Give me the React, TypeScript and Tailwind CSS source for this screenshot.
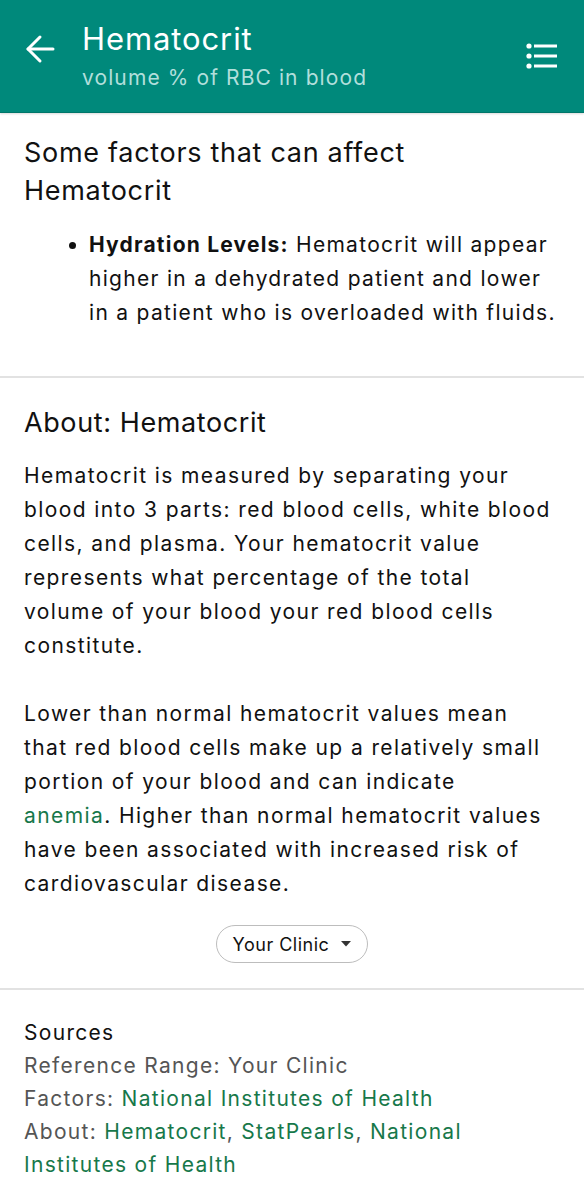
import React from "react";

function BackArrow() {
  return (
    <svg width="30" height="30" viewBox="0 0 30 30" fill="none" stroke="white" strokeWidth="3" strokeLinecap="round" strokeLinejoin="round">
      <path d="M3 15H28" />
      <path d="M15 3L3 15L15 27" />
    </svg>
  );
}

function MenuIcon() {
  return (
    <svg width="34" height="26" viewBox="0 0 34 26" fill="white">
      <circle cx="4" cy="3" r="2.6" />
      <circle cx="4" cy="13" r="2.6" />
      <circle cx="4" cy="23" r="2.6" />
      <rect x="9" y="1.5" width="23" height="3" />
      <rect x="9" y="11.5" width="23" height="3" />
      <rect x="9" y="21.5" width="23" height="3" />
    </svg>
  );
}

function Link({ children }: { children: React.ReactNode }) {
  return <span className="text-[#17784a]">{children}</span>;
}

export default function App() {
  return (
    <div className="w-[584px] min-h-[1200px] bg-white text-[#111] font-['Inter','Noto_Sans',sans-serif]">
      <header className="h-[113px] bg-[#00897b] border-b border-[#00766a] shadow-[0_1px_2px_rgba(0,0,0,0.15)] flex items-start">
        <div className="w-[82px] pl-[25px] pt-[34px] shrink-0">
          <BackArrow />
        </div>
        <div className="flex-1 flex flex-col pt-[19px]">
          <div className="text-white text-[31px] leading-[40px] tracking-[0.9px]">Hematocrit</div>
          <div className="text-[#b2dfdb] text-[21px] leading-[30px] tracking-[1.1px] mt-[4px]">volume % of RBC in blood</div>
        </div>
        <div className="pr-[25px] pt-[43px] shrink-0">
          <MenuIcon />
        </div>
      </header>

      <section className="pl-[24px] pr-[16px] pt-[21px] pb-[46px] border-b-2 border-[#e2e2e2]">
        <h2 className="text-[27px] leading-[38px] tracking-[0.7px] font-normal">
          Some factors that can affect
          <br />
          Hematocrit
        </h2>
        <ul className="mt-[18px] pl-[65px] list-none text-[21px] leading-[34px] tracking-[1.3px]">
          <li className="relative">
            <span className="absolute left-[-20px] top-[14px] w-[7px] h-[7px] rounded-full bg-[#111]" />
            <span className="font-bold tracking-[1.2px]">Hydration Levels:</span> Hematocrit will appear
            <br />
            higher in a dehydrated patient and lower
            <br />
            in a patient who is overloaded with fluids.
          </li>
        </ul>
      </section>

      <section className="pl-[24px] pr-[16px] pt-[26px] pb-[25px] border-b-2 border-[#e2e2e2] flex flex-col">
        <h2 className="text-[27px] leading-[38px] tracking-[0.6px] font-normal">About: Hematocrit</h2>
        <div className="mt-[17px] text-[21px] leading-[34px] tracking-[1.4px]">
          <p>
            Hematocrit is measured by separating your
            <br />
            blood into 3 parts: red blood cells, white blood
            <br />
            cells, and plasma. Your hematocrit value
            <br />
            represents what percentage of the total
            <br />
            volume of your blood your red blood cells
            <br />
            constitute.
          </p>
          <p className="mt-[34px]">
            Lower than normal hematocrit values mean
            <br />
            that red blood cells make up a relatively small
            <br />
            portion of your blood and can indicate
            <br />
            <Link>anemia</Link>. Higher than normal hematocrit values
            <br />
            have been associated with increased risk of
            <br />
            cardiovascular disease.
          </p>
        </div>
        <div className="mt-[24px] flex justify-center pr-[8px]">
          <button className="h-[38px] w-[152px] rounded-full border-[1.5px] border-[#bdbdbd] flex items-center justify-center gap-[12px] text-[18px] tracking-[0.5px] text-[#111]">
            <span>Your Clinic</span>
            <svg width="10" height="6" viewBox="0 0 10 6" fill="#333">
              <path d="M0 0H10L5 5.5Z" />
            </svg>
          </button>
        </div>
      </section>

      <section className="pl-[24px] pr-[16px] pt-[26px] pb-[20px] text-[21px] leading-[33px] tracking-[1.3px]">
        <div className="text-[#111]">Sources</div>
        <div className="text-[#555]">Reference Range: Your Clinic</div>
        <div className="text-[#555]">
          Factors: <Link>National Institutes of Health</Link>
        </div>
        <div className="text-[#555]">
          About: <Link>Hematocrit</Link>, <Link>StatPearls</Link>, <Link>National</Link>
          <br />
          <Link>Institutes of Health</Link>
        </div>
      </section>
    </div>
  );
}
